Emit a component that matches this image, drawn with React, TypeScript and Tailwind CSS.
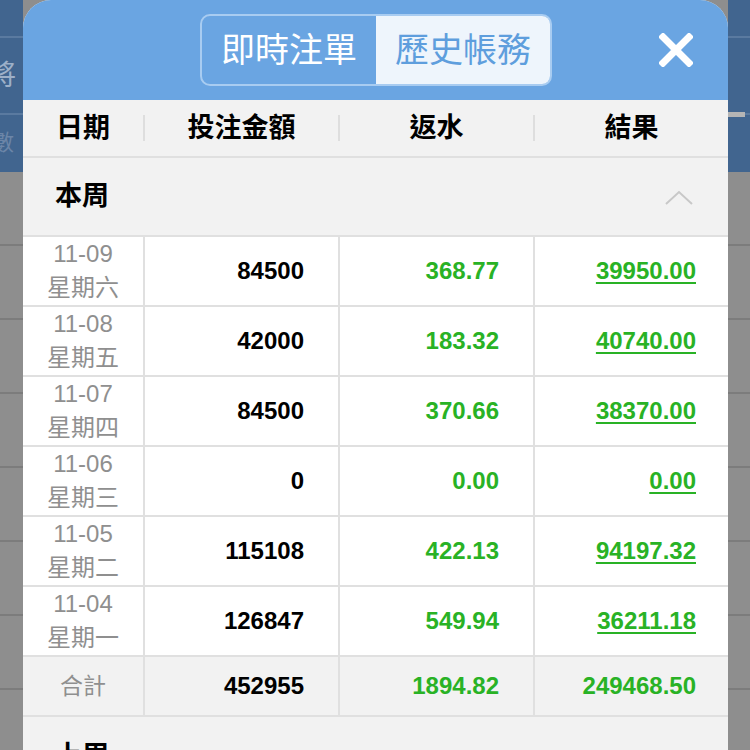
const rows = [
  { date: "11-09", day: "星期六", bet: "84500", rebate: "368.77", result: "39950.00" },
  { date: "11-08", day: "星期五", bet: "42000", rebate: "183.32", result: "40740.00" },
  { date: "11-07", day: "星期四", bet: "84500", rebate: "370.66", result: "38370.00" },
  { date: "11-06", day: "星期三", bet: "0", rebate: "0.00", result: "0.00" },
  { date: "11-05", day: "星期二", bet: "115108", rebate: "422.13", result: "94197.32" },
  { date: "11-04", day: "星期一", bet: "126847", rebate: "549.94", result: "36211.18" },
];

const font = "font-['Liberation_Sans','Noto_Sans_CJK_TC',sans-serif]";

const Chevron = ({ up }: { up: boolean }) => (
  <svg width="30" height="18" viewBox="0 0 30 18" fill="none">
    <polyline
      points={up ? "2,16 15,4 28,16" : "2,3 15,15 28,3"}
      stroke="#c8c8c8"
      strokeWidth="2"
    />
  </svg>
);

const Backdrop = ({ side }: { side: "left" | "right" }) => (
  <div className="flex h-full flex-col overflow-hidden">
    <div className="h-[172px] shrink-0 bg-[#41658f]">
      <div className="h-[38px] border-b-2 border-[#5a7aa0]" />
      <div className="flex h-[77px] items-center border-b-2 border-[#5a7aa0]">
        {side === "left" ? (
          <span className="-ml-[12px] text-[28px] text-[#9db0c8]">將</span>
        ) : (
          <div className="mt-auto mb-[-4px] h-[5px] w-[17px] bg-[#b5b5b5]" />
        )}
      </div>
      <div className="flex h-[55px] items-center">
        {side === "left" && (
          <span className="-ml-[8px] text-[22px] text-[#6c86a8]">數</span>
        )}
      </div>
    </div>
    {Array.from({ length: 8 }).map((_, i) => (
      <div key={i} className="h-[74px] shrink-0 border-b-2 border-[#7c7c7c] bg-[#8e8e8e]" />
    ))}
  </div>
);

export default function App() {
  return (
    <div className={`flex h-[750px] w-[750px] overflow-hidden bg-[#8e8e8e] ${font}`}>
      <div className="w-[23px] shrink-0">
        <Backdrop side="left" />
      </div>

      <div className="flex w-[705px] shrink-0 flex-col overflow-hidden rounded-t-[28px] bg-[#f2f2f2]">
        <div className="relative flex h-[100px] shrink-0 items-center justify-center bg-[#6aa5e2]">
          <div className="ml-[1px] flex h-[72px] overflow-hidden rounded-[10px] border-2 border-[#a8ccf1]">
            <div className="flex w-[174px] items-center justify-center text-[34px] text-white">即時注單</div>
            <div className="flex w-[174px] items-center justify-center bg-[#eef5fc] text-[34px] text-[#5e9edd]">歷史帳務</div>
          </div>
          <svg className="absolute right-[35px] top-[33px]" width="34" height="34" viewBox="0 0 34 34">
            <path d="M4 4 L30 30 M30 4 L4 30" stroke="white" strokeWidth="7" strokeLinecap="square" />
          </svg>
        </div>

        <div className="flex h-[58px] shrink-0 items-center border-b-2 border-[#e0e0e0] text-[27px] font-bold text-black">
          <div className="flex w-[120px] justify-center">日期</div>
          <div className="h-[26px] w-[2px] bg-[#dedede]" />
          <div className="flex w-[193px] justify-center">投注金額</div>
          <div className="h-[26px] w-[2px] bg-[#dedede]" />
          <div className="flex w-[193px] justify-center">返水</div>
          <div className="h-[26px] w-[2px] bg-[#dedede]" />
          <div className="flex flex-1 justify-center">結果</div>
        </div>

        <div className="flex h-[77px] shrink-0 items-center justify-between pl-[32px] pr-[34px]">
          <span className="text-[27px] font-bold text-black">本周</span>
          <Chevron up />
        </div>

        {rows.map((r) => (
          <div key={r.date} className="flex h-[70px] shrink-0 border-t-2 border-[#e0e0e0] bg-white">
            <div className="flex w-[120px] flex-col items-center justify-center text-[24px] leading-[34px] text-[#8f8f8f]">
              <span>{r.date}</span>
              <span>{r.day}</span>
            </div>
            <div className="w-[2px] bg-[#e0e0e0]" />
            <div className="flex w-[193px] items-center justify-end pr-[34px] text-[24px] font-bold text-black">{r.bet}</div>
            <div className="w-[2px] bg-[#e0e0e0]" />
            <div className="flex w-[193px] items-center justify-end pr-[34px] text-[24px] font-bold text-[#29b225]">{r.rebate}</div>
            <div className="w-[2px] bg-[#e0e0e0]" />
            <div className="flex flex-1 items-center justify-end pr-[32px] text-[24px] font-bold text-[#29b225] underline decoration-2 underline-offset-[3px]">{r.result}</div>
          </div>
        ))}

        <div className="flex h-[62px] shrink-0 border-y-2 border-[#e0e0e0]">
          <div className="flex w-[120px] items-center justify-center text-[23px] text-[#8f8f8f]">合計</div>
          <div className="w-[2px] bg-[#e0e0e0]" />
          <div className="flex w-[193px] items-center justify-end pr-[34px] text-[24px] font-bold text-black">452955</div>
          <div className="w-[2px] bg-[#e0e0e0]" />
          <div className="flex w-[193px] items-center justify-end pr-[34px] text-[24px] font-bold text-[#29b225]">1894.82</div>
          <div className="w-[2px] bg-[#e0e0e0]" />
          <div className="flex flex-1 items-center justify-end pr-[32px] text-[24px] font-bold text-[#29b225]">249468.50</div>
        </div>

        <div className="flex h-[77px] shrink-0 items-center justify-between pl-[32px] pr-[34px] pt-[2px]">
          <span className="text-[27px] font-bold text-black">上周</span>
          <Chevron up={false} />
        </div>
      </div>

      <div className="w-[22px] shrink-0">
        <Backdrop side="right" />
      </div>
    </div>
  );
}
